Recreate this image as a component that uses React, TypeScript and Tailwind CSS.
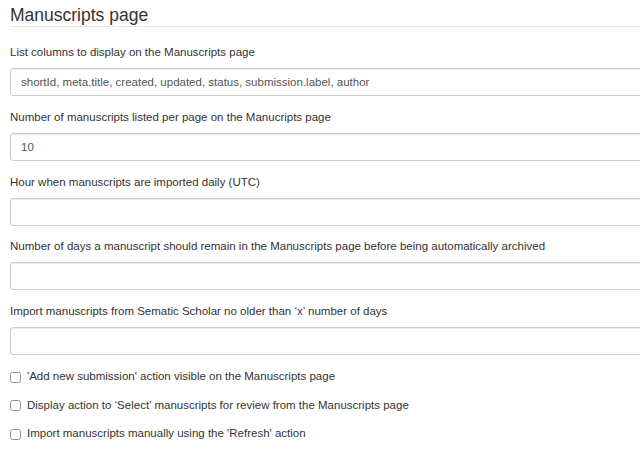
import React from "react";

const fields = [
  {
    label: "List columns to display on the Manuscripts page",
    value: "shortId, meta.title, created, updated, status, submission.label, author",
  },
  { label: "Number of manuscripts listed per page on the Manucripts page", value: "10" },
  { label: "Hour when manuscripts are imported daily (UTC)", value: "" },
  {
    label:
      "Number of days a manuscript should remain in the Manuscripts page before being automatically archived",
    value: "",
  },
  { label: "Import manuscripts from Sematic Scholar no older than \u2018x\u2019 number of days", value: "" },
];

const checks = [
  "'Add new submission' action visible on the Manuscripts page",
  "Display action to \u2018Select\u2019 manuscripts for review from the Manuscripts page",
  "Import manuscripts manually using the 'Refresh' action",
];

export default function App() {
  return (
    <div className="w-[640px] h-[459px] overflow-hidden bg-white font-['Liberation_Sans',Arial,sans-serif] text-[#333]">
      <div className="pl-[10px]">
        {/* Section title */}
        <h1 className="mt-[5px] pb-[1px] text-[17.5px] leading-[20px] font-normal border-b border-[#e5e5e5]">
          Manuscripts page
        </h1>

        <div className="mt-[17px]">
          {fields.map((f, i) => (
            <div key={i} className="mb-[12.75px]">
              <label className="block text-[11.5px] leading-[16px] mb-[8px] whitespace-nowrap">{f.label}</label>
              <input
                type="text"
                defaultValue={f.value}
                className="block w-[680px] h-[28px] px-[10px] text-[11.5px] text-[#555] bg-white border border-[#ccc] rounded-[3px] shadow-[inset_0_1px_1px_rgba(0,0,0,0.075)] outline-none"
              />
            </div>
          ))}
        </div>

        <div className="mt-[-5px]">
          {checks.map((c, i) => (
            <label key={i} className="flex items-center h-[28.5px] text-[11.5px] whitespace-nowrap">
              <input type="checkbox" className="m-0 w-[11px] h-[11px] mr-[6px] opacity-80" />
              {c}
            </label>
          ))}
        </div>
      </div>
    </div>
  );
}
